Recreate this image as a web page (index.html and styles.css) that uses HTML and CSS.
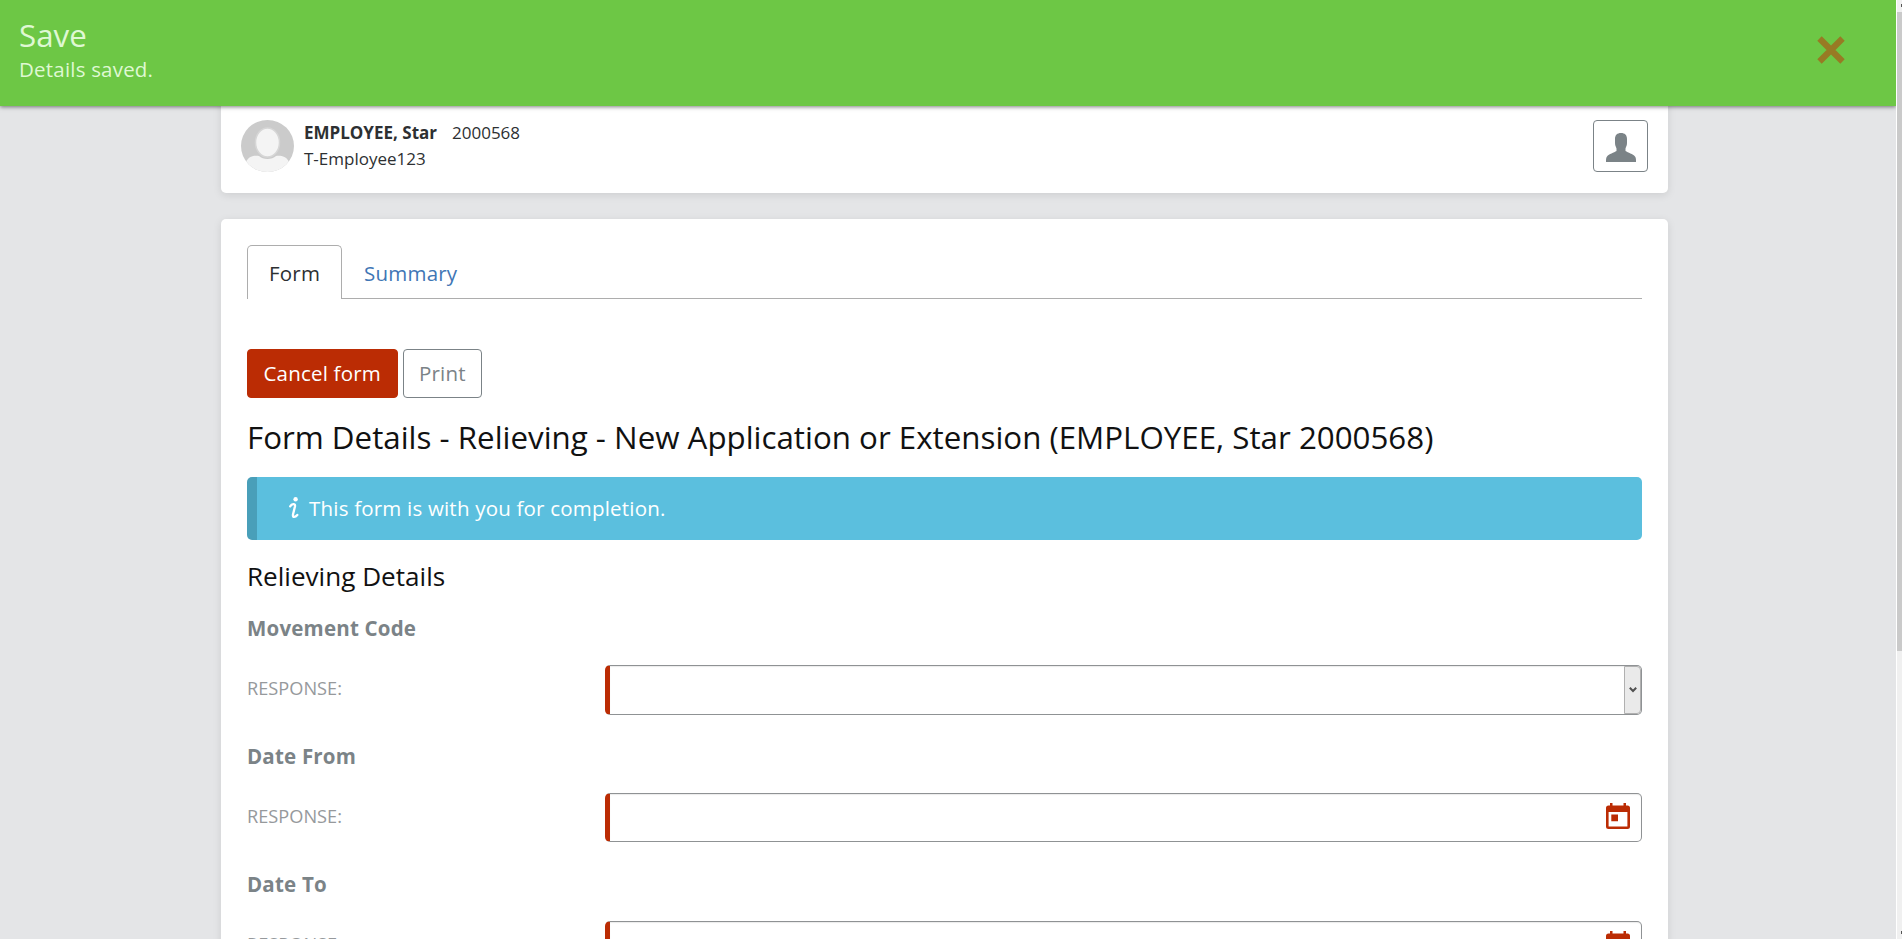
FILE: index.html
```html
<!DOCTYPE html>
<html lang="en">
<head>
<meta charset="utf-8">
<title>Form Details</title>
<link rel="stylesheet" href="styles.css">
</head>
<body>
<div class="toast">
  <div class="toast-body">
    <div class="toast-title">Save</div>
    <div class="toast-text">Details saved.</div>
  </div>
  <svg class="toast-close" viewBox="0 0 28 28"><path d="M2.500 2.500L25.500 25.500M25.500 2.500L2.500 25.500" stroke="#987a24" stroke-width="6.200"/></svg>
</div>
<div class="scrollbar"><div class="scroll-top"></div><div class="scroll-thumb"></div><div class="scroll-bottom"></div></div>

<main class="page">
  <section class="card person">
    <svg class="avatar" viewBox="0 0 53 52">
      <defs><clipPath id="round"><ellipse cx="26.500" cy="26" rx="26.500" ry="26"/></clipPath></defs>
      <g clip-path="url(#round)">
        <rect width="53" height="52" fill="#cbcbcb"/>
        <path d="M5 42C8 36 13 35.500 18 36C22 40 31 40 35 36C40 35.500 45 36 48 42L52 52H1Z" fill="#f4f4f4"/>
        <ellipse cx="26.500" cy="22.500" rx="12" ry="14.500" fill="#f4f4f4" stroke="#d6d6d6" stroke-width="1.500"/>
      </g>
    </svg>
    <div class="person-info">
      <div><strong class="person-name">EMPLOYEE, Star</strong><span class="person-id">2000568</span></div>
      <div class="person-role">T-Employee123</div>
    </div>
    <button class="profile-btn">
      <svg width="30" height="29" viewBox="0 0 30 29"><path d="M15 0C18.800 0 21 2 21 6V10C21 13 19.800 14 19.500 15.500V18C22 19.500 27 21 29 23.500C30 25 30 26 30 29H0C0 26 0 25 1 23.500C3 21 8 19.500 10.500 18V15.500C10.200 14 9 13 9 10V6C9 2 11.200 0 15 0Z" fill="#7b8387"/></svg>
    </button>
  </section>

  <section class="card form">
    <nav class="tabs">
      <a class="tab active">Form</a>
      <a class="tab">Summary</a>
    </nav>
    <div class="actions">
      <button class="btn danger">Cancel form</button>
      <button class="btn">Print</button>
    </div>
    <h2 class="title">Form Details - Relieving - New Application or Extension (EMPLOYEE, Star 2000568)</h2>
    <div class="alert">
      <svg class="info" width="10" height="22" viewBox="0 0 10 22"><circle cx="6.600" cy="2.200" r="2.200" fill="#fff"/><path d="M1.200 9.300C2.500 7.300 6.600 5.800 6 9.300L4 17.500C3.400 20.800 6.300 20.500 8.300 18" fill="none" stroke="#fff" stroke-width="2.300" stroke-linecap="round"/></svg>
      <span class="alert-text">This form is with you for completion.</span>
    </div>
    <h3 class="subtitle">Relieving Details</h3>

    <div class="group">
      <div class="label">Movement Code</div>
      <div class="row">
        <span class="response">RESPONSE:</span>
        <div class="field select"><span class="drop"><svg width="8" height="6" viewBox="0 0 8 6"><path d="M0.800 0.800L4 4L7.200 0.800" fill="none" stroke="#505050" stroke-width="2"/></svg></span></div>
      </div>
    </div>
    <div class="group">
      <div class="label">Date From</div>
      <div class="row">
        <span class="response">RESPONSE:</span>
        <div class="field">
          <svg class="calendar" viewBox="0 0 24 26"><path fill-rule="evenodd" d="M4 0H6.500V2.500H17.500V0H20V2.500H21.500Q24 2.500 24 5V23.500Q24 26 21.500 26H2.500Q0 26 0 23.500V5Q0 2.500 2.500 2.500H4ZM2.600 9V23.500H21.400V9ZM5.300 11.500H12V18.200H5.300Z" fill="#bb2c04"/></svg>
        </div>
      </div>
    </div>
    <div class="group">
      <div class="label">Date To</div>
      <div class="row">
        <span class="response">RESPONSE:</span>
        <div class="field">
          <svg class="calendar" viewBox="0 0 24 26"><path fill-rule="evenodd" d="M4 0H6.500V2.500H17.500V0H20V2.500H21.500Q24 2.500 24 5V23.500Q24 26 21.500 26H2.500Q0 26 0 23.500V5Q0 2.500 2.500 2.500H4ZM2.600 9V23.500H21.400V9ZM5.300 11.500H12V18.200H5.300Z" fill="#bb2c04"/></svg>
        </div>
      </div>
    </div>
  </section>
</main>
</body>
</html>
```
FILE: styles.css
```css
* { box-sizing: border-box; }
html, body { margin: 0; height: 939px; overflow: hidden; }
body { background: #e4e5e7; font-family: "Open Sans", "Noto Sans", sans-serif; color: #2d3032; font-size: 20.5px; }
.toast-text, .tab, .btn, .alert-text, .label { letter-spacing: .2px; }

.toast { position: absolute; z-index: 2; top: 0; left: 0; width: 1896px; height: 106px; background: #6dc745; box-shadow: 0 1px 4px rgba(0,0,0,.5); display: flex; justify-content: space-between; align-items: flex-start; padding: 15px 51px 0 19px; color: #dff8d3; }
.toast-title { font-size: 31.3px; line-height: 40px; }
.toast-text { line-height: 28px; }
.toast-close { width: 28px; height: 28px; margin-top: 21px; }

.scrollbar { position: absolute; z-index: 3; top: 0; right: 0; width: 6px; height: 939px; background: #f0f0f0; border-left: 1px solid #fff; display: flex; flex-direction: column; }
.scroll-top { height: 12px; background: linear-gradient(#555, #555) 100% 4px / 1px 3px no-repeat; }
.scroll-thumb { height: 639px; background: #cacaca; }
.scroll-bottom { flex: 1; background: linear-gradient(#555, #555) 100% 280px / 1px 3px no-repeat; }

.page { width: 1447px; margin-left: 221px; display: flex; flex-direction: column; gap: 26px; }
.card { background: #fff; border-radius: 5px; box-shadow: 0 2px 8px rgba(0,0,0,.1); }

.person { height: 193px; flex: none; padding: 120px 20px 0; display: flex; align-items: flex-start; }
.avatar { width: 53px; height: 52px; }
.person-info { flex: 1; margin-left: 10px; font-size: 17px; line-height: 26px; }
.person-name { margin-right: 15px; }
.profile-btn { width: 55px; height: 52px; border: 1px solid #7b8387; border-radius: 4px; background: #fff; display: flex; align-items: center; justify-content: center; padding: 3px 0 0; }

.form { height: 760px; flex: none; padding: 26px 26px 0; }
.tabs { display: flex; height: 54px; border-bottom: 1px solid #adadad; }
.tab { height: 54px; padding: 13px 21px 0; line-height: 28px; color: #3f76b5; border: 1px solid transparent; }
.tab.active { color: #2d3032; border-color: #adadad; border-bottom: 0; border-radius: 5px 5px 0 0; background: #fff; }

.actions { display: flex; gap: 5px; margin-top: 50px; }
.btn { height: 49px; padding: 0 15.5px 2px; border: 1px solid #7b8387; border-radius: 4px; background: #fff; color: #7b8387; font-family: inherit; font-size: inherit; }
.btn.danger { background: #bb2c04; border-color: #bb2c04; color: #fff; }

.title { margin: 18px 0 0; font-weight: 400; font-size: 31.3px; line-height: 42px; color: #111; white-space: nowrap; }
.alert { margin-top: 19px; height: 63px; display: flex; align-items: center; gap: 10px; background: #5bbfde; border-left: 10px solid #499fb9; border-radius: 5px; color: #fff; padding: 0 0 2px 32px; }
.subtitle { margin: 18px 0 20px; font-weight: 400; font-size: 26.1px; line-height: 36px; color: #111; }

.group { height: 128px; }
.label { font-weight: 700; line-height: 28px; color: #7b8387; }
.row { display: flex; margin-top: 23px; }
.response { width: 358px; padding-top: 10px; font-size: 18.2px; line-height: 26px; color: #96999c; }
.field { flex: 1; height: 49px; border: 1px solid #8f9294; border-left: 5px solid #bb2c04; border-radius: 5px; background: #fff; display: flex; justify-content: flex-end; padding: 9px 11px 0 0; box-shadow: inset 0 1px 1px rgba(0,0,0,.08); }
.field.select { height: 50px; padding: 0; }
.calendar { width: 24px; height: 26px; }
.drop { width: 17px; height: 48px; background: #eaeaea; border: 1px solid #b0b0b0; border-radius: 0 4px 4px 0; display: flex; align-items: center; justify-content: center; }
```
